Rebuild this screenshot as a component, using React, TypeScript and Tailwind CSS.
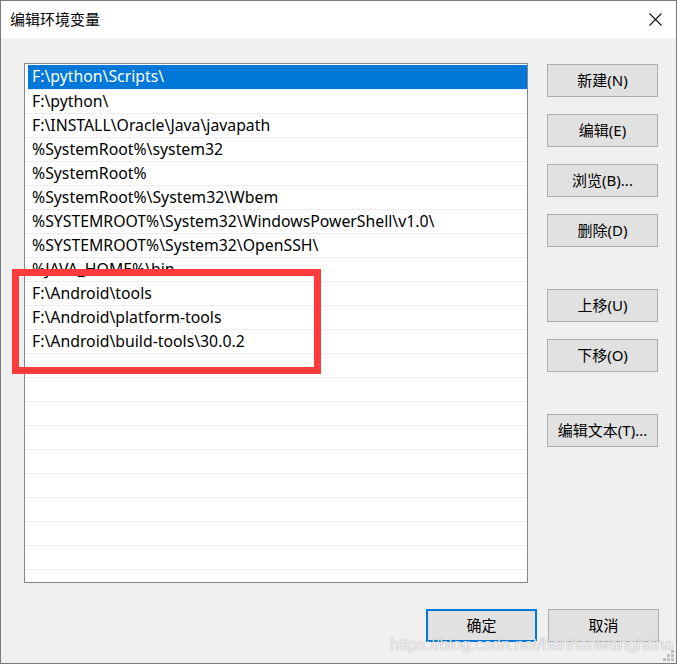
import React from "react";

const font = {
  fontFamily: '"Noto Sans", "Noto Sans CJK SC", sans-serif',
};

const paths = [
  "F:\\python\\Scripts\\",
  "F:\\python\\",
  "F:\\INSTALL\\Oracle\\Java\\javapath",
  "%SystemRoot%\\system32",
  "%SystemRoot%",
  "%SystemRoot%\\System32\\Wbem",
  "%SYSTEMROOT%\\System32\\WindowsPowerShell\\v1.0\\",
  "%SYSTEMROOT%\\System32\\OpenSSH\\",
  "%JAVA_HOME%\\bin",
  "F:\\Android\\tools",
  "F:\\Android\\platform-tools",
  "F:\\Android\\build-tools\\30.0.2",
];

const rows = [...paths, ...Array(10).fill("")];

function Btn({ label, primary }: { label: string; primary?: boolean }) {
  return (
    <button
      className={
        "flex h-[33px] w-[111px] items-center justify-center bg-[#e1e1e1] text-[15px] text-black " +
        (primary ? "border-2 border-[#0078d7]" : "border border-[#adadad]")
      }
    >
      {label}
    </button>
  );
}

function Grip() {
  const dots = [
    [2, 0],
    [1, 1],
    [2, 1],
    [0, 2],
    [1, 2],
    [2, 2],
  ];
  return (
    <svg width="11" height="11" className="absolute bottom-[2px] right-[2px]">
      {dots.map(([x, y]) => (
        <rect key={`${x}-${y}`} x={x * 4} y={y * 4} width="3" height="3" fill="#bdbdbd" />
      ))}
    </svg>
  );
}

export default function App() {
  return (
    <div
      className="relative flex h-[664px] w-[677px] flex-col overflow-hidden border border-[#7a7a7a] bg-[#f0f0f0]"
      style={font}
    >
      {/* title bar */}
      <div className="flex h-[37px] shrink-0 items-center justify-between bg-white pl-[9px] pr-[14px]">
        <span className="text-[15px] text-black">编辑环境变量</span>
        <svg width="13" height="13" viewBox="0 0 13 13">
          <path d="M0.5 0.5 L12.5 12.5 M12.5 0.5 L0.5 12.5" stroke="#111" strokeWidth="1.1" />
        </svg>
      </div>

      <div className="flex pl-[23px] pt-[25px]">
        {/* list */}
        <div className="h-[520px] w-[504px] overflow-hidden border border-[#82868f] bg-white pt-[1px]">
          {rows.map((p, i) => (
            <div
              key={i}
              className={
                "flex h-[24px] items-center " + (i > 0 ? "border-t border-[#eeeeee]" : "")
              }
            >
              <div
                className={
                  "ml-[3px] flex h-full flex-1 items-center pl-[4px] text-[15.8px] leading-none " +
                  (i === 0 ? "bg-[#0078d7] text-white" : "text-black")
                }
              >
                {p}
              </div>
            </div>
          ))}
        </div>

        {/* right buttons */}
        <div className="ml-[19px] mt-[1px] flex flex-col">
          <div className="flex flex-col gap-[17px]">
            <Btn label="新建(N)" />
            <Btn label="编辑(E)" />
            <Btn label="浏览(B)..." />
            <Btn label="删除(D)" />
          </div>
          <div className="mt-[42px] flex flex-col gap-[17px]">
            <Btn label="上移(U)" />
            <Btn label="下移(O)" />
          </div>
          <div className="mt-[42px]">
            <Btn label="编辑文本(T)..." />
          </div>
        </div>
      </div>

      {/* bottom buttons */}
      <div className="flex justify-end gap-[11px] pr-[17px] pt-[26px]">
        <Btn label="确定" primary />
        <Btn label="取消" />
      </div>

      {/* annotation */}
      <div className="pointer-events-none absolute left-[11px] top-[268px] h-[105px] w-[309px] border-[7px] border-[#fe3b3b]" />

      {/* watermark */}
      <div
        className="pointer-events-none absolute left-[389px] top-[635px] text-[16.5px] leading-none text-white/85 [text-shadow:0_0_1px_rgba(0,0,0,0.45)]"
        style={{ fontFamily: '"Liberation Sans", Arial, sans-serif' }}
      >
        https://blog.csdn.net/hanhanwanghaha
      </div>

      <Grip />
    </div>
  );
}
